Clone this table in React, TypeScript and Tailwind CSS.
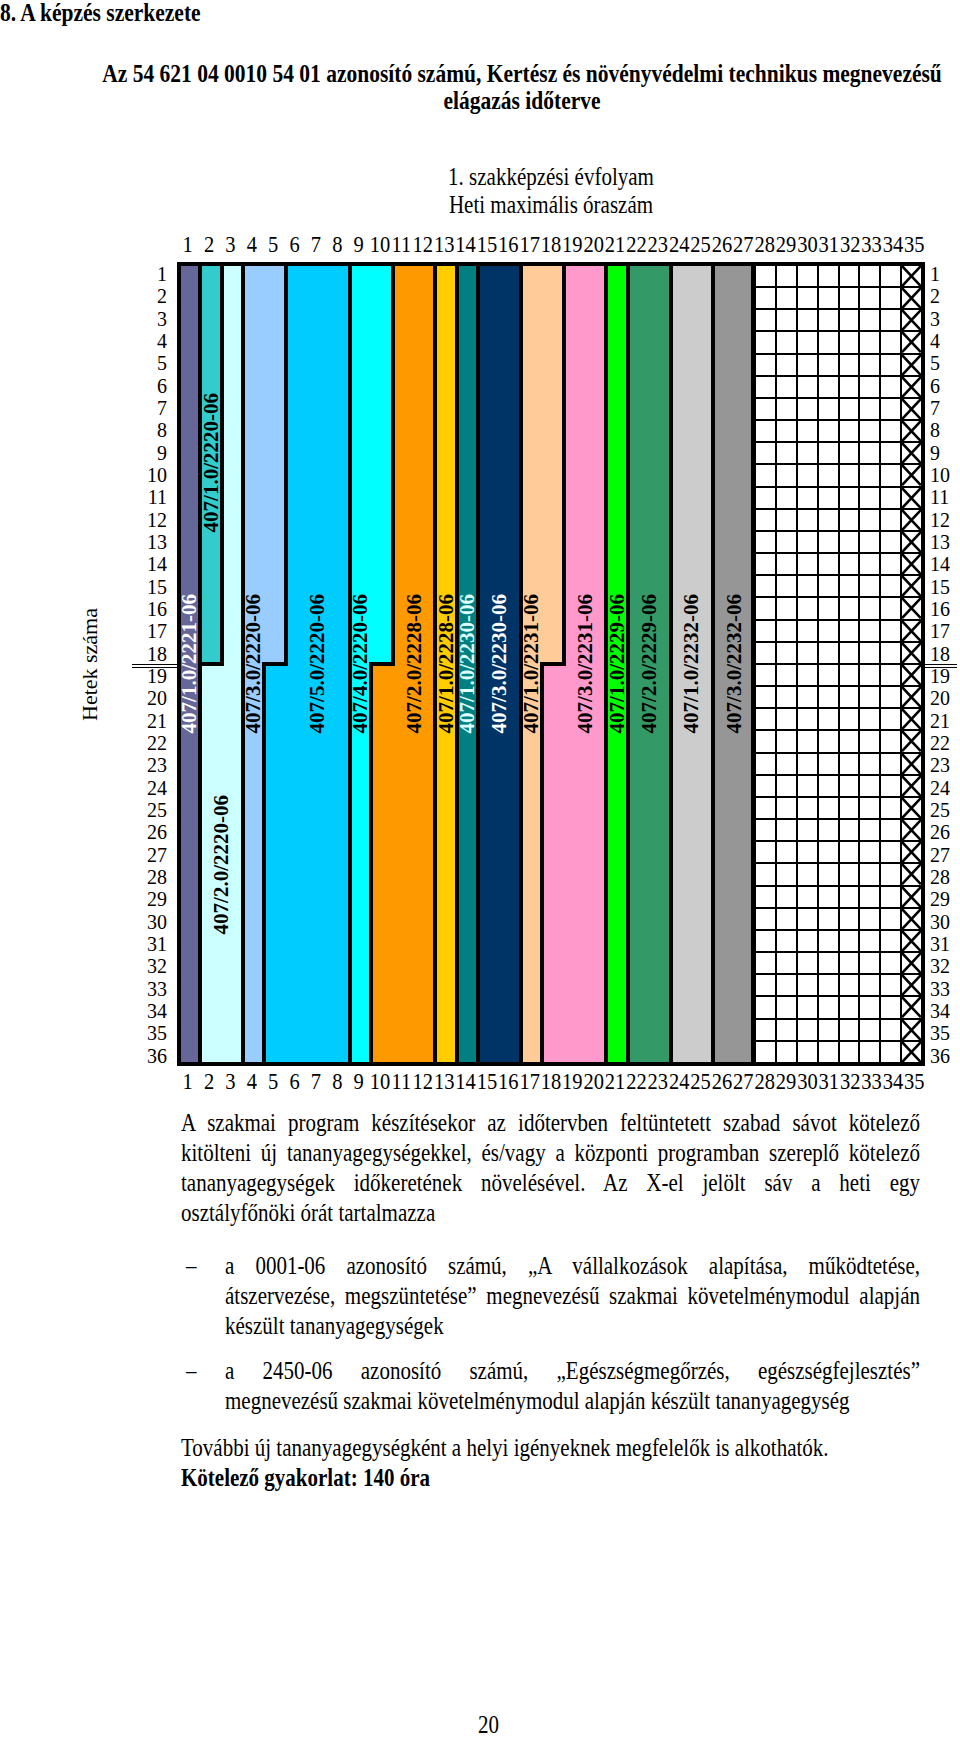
import clsx from 'clsx'

const rows = Array.from({ length: 36 }, (_, i) => i + 1)
const cols = Array.from({ length: 35 }, (_, i) => i + 1)

// colour fills of the timetable; L-shaped modules are split into a top and a bottom half
const pieces = [
  'col-start-1 col-span-1 row-start-1 row-span-36 ml-[4px] mt-[4px] mb-[4px] bg-[#666699]',
  'col-start-2 col-span-1 row-start-1 row-span-18 ml-[4px] mt-[4px] mb-[2px] bg-[#33cccc]',
  'col-start-3 col-span-1 row-start-1 row-span-18 ml-[4px] mt-[4px] -mb-[2px] bg-[#ccffff]',
  'col-start-2 col-span-2 row-start-19 row-span-18 ml-[4px] mt-[2px] mb-[4px] bg-[#ccffff]',
  'col-start-4 col-span-2 row-start-1 row-span-18 ml-[4px] mt-[4px] mb-[2px] bg-[#99ccff]',
  'col-start-4 col-span-1 row-start-19 row-span-18 ml-[4px] -mt-[2px] mb-[4px] bg-[#99ccff]',
  'col-start-6 col-span-3 row-start-1 row-span-18 ml-[4px] mt-[4px] -mb-[2px] bg-[#00ccff]',
  'col-start-5 col-span-4 row-start-19 row-span-18 ml-[4px] mt-[2px] mb-[4px] bg-[#00ccff]',
  'col-start-9 col-span-2 row-start-1 row-span-18 ml-[4px] mt-[4px] mb-[2px] bg-[#00ffff]',
  'col-start-9 col-span-1 row-start-19 row-span-18 ml-[4px] -mt-[2px] mb-[4px] bg-[#00ffff]',
  'col-start-11 col-span-2 row-start-1 row-span-18 ml-[4px] mt-[4px] -mb-[2px] bg-[#ff9900]',
  'col-start-10 col-span-3 row-start-19 row-span-18 ml-[4px] mt-[2px] mb-[4px] bg-[#ff9900]',
  'col-start-13 col-span-1 row-start-1 row-span-36 ml-[4px] mt-[4px] mb-[4px] bg-[#ffcc00]',
  'col-start-14 col-span-1 row-start-1 row-span-36 ml-[4px] mt-[4px] mb-[4px] bg-[#008080]',
  'col-start-15 col-span-2 row-start-1 row-span-36 ml-[4px] mt-[4px] mb-[4px] bg-[#003366]',
  'col-start-17 col-span-2 row-start-1 row-span-18 ml-[4px] mt-[4px] mb-[2px] bg-[#ffcc99]',
  'col-start-17 col-span-1 row-start-19 row-span-18 ml-[4px] -mt-[2px] mb-[4px] bg-[#ffcc99]',
  'col-start-19 col-span-2 row-start-1 row-span-18 ml-[4px] mt-[4px] -mb-[2px] bg-[#ff99cc]',
  'col-start-18 col-span-3 row-start-19 row-span-18 ml-[4px] mt-[2px] mb-[4px] bg-[#ff99cc]',
  'col-start-21 col-span-1 row-start-1 row-span-36 ml-[4px] mt-[4px] mb-[4px] bg-[#00ff00]',
  'col-start-22 col-span-2 row-start-1 row-span-36 ml-[4px] mt-[4px] mb-[4px] bg-[#339966]',
  'col-start-24 col-span-2 row-start-1 row-span-36 ml-[4px] mt-[4px] mb-[4px] bg-[#cccccc]',
  'col-start-26 col-span-2 row-start-1 row-span-36 ml-[4px] mt-[4px] mb-[4px] mr-[3px] bg-[#969696]',
]

const labels = [
  { cls: 'col-start-1 col-span-1 row-start-1 row-span-36 text-white', text: '407/1.0/2221-06' },
  { cls: 'col-start-2 col-span-1 row-start-1 row-span-18', text: '407/1.0/2220-06' },
  { cls: 'col-start-2 col-span-2 row-start-19 row-span-18', text: '407/2.0/2220-06' },
  { cls: 'col-start-4 col-span-1 row-start-1 row-span-36', text: '407/3.0/2220-06' },
  { cls: 'col-start-6 col-span-3 row-start-1 row-span-36', text: '407/5.0/2220-06' },
  { cls: 'col-start-9 col-span-1 row-start-1 row-span-36', text: '407/4.0/2220-06' },
  { cls: 'col-start-11 col-span-2 row-start-1 row-span-36', text: '407/2.0/2228-06' },
  { cls: 'col-start-13 col-span-1 row-start-1 row-span-36', text: '407/1.0/2228-06' },
  { cls: 'col-start-14 col-span-1 row-start-1 row-span-36 text-[#ddffff]', text: '407/1.0/2230-06' },
  { cls: 'col-start-15 col-span-2 row-start-1 row-span-36 text-white', text: '407/3.0/2230-06' },
  { cls: 'col-start-17 col-span-1 row-start-1 row-span-36', text: '407/1.0/2231-06' },
  { cls: 'col-start-19 col-span-2 row-start-1 row-span-36', text: '407/3.0/2231-06' },
  { cls: 'col-start-21 col-span-1 row-start-1 row-span-36', text: '407/1.0/2229-06' },
  { cls: 'col-start-22 col-span-2 row-start-1 row-span-36', text: '407/2.0/2229-06' },
  { cls: 'col-start-24 col-span-2 row-start-1 row-span-36', text: '407/1.0/2232-06' },
  { cls: 'col-start-26 col-span-2 row-start-1 row-span-36', text: '407/3.0/2232-06' },
]

function NumberRow() {
  return (
    <div className="ml-[177px] grid h-[26px] w-[748px] grid-cols-35">
      {cols.map((n) => (
        <div key={n} className="flex items-center justify-center whitespace-nowrap">
          <span className="inline-block scale-y-[1.15] text-[20.5px]">{n}</span>
        </div>
      ))}
    </div>
  )
}

function RowLabels({ right }: { right?: boolean }) {
  return (
    <div className={clsx('grid h-[804px] grid-rows-36', right ? 'w-[32px]' : 'w-[45px]')}>
      {rows.map((n) => (
        <div
          key={n}
          className={clsx(
            'flex items-center',
            right ? 'justify-start pl-[5px]' : 'justify-end pr-[10px]',
            n === 18 && '-mb-[4px] border-b-[4px] border-double border-black'
          )}
        >
          <span className="inline-block scale-y-[1.08] text-[20px] leading-none">{n}</span>
        </div>
      ))}
    </div>
  )
}

function Line({ children, justify, className }: { children: React.ReactNode; justify?: boolean; className?: string }) {
  return (
    <div
      className={clsx(
        'h-[30px] scale-y-[1.15] leading-[30px]',
        justify && 'text-justify [text-align-last:justify]',
        className
      )}
    >
      {children}
    </div>
  )
}

export default function App() {
  return (
    <div className="relative h-[1739px] w-[960px] overflow-hidden bg-white text-[21px] text-black [font-family:'Liberation_Serif','Times_New_Roman',serif]">
      <div className="h-[26px] scale-y-[1.15] text-[21.5px] leading-[26px] font-bold">8. A képzés szerkezete</div>

      <div className="mt-[35px] ml-[100px] w-[844px] text-center text-[21.5px] font-bold">
        <div className="h-[27px] scale-y-[1.15] leading-[27px]">
          Az 54 621 04 0010 54 01 azonosító számú, Kertész és növényvédelmi technikus megnevezésű
        </div>
        <div className="h-[27px] scale-y-[1.15] leading-[27px]">elágazás időterve</div>
      </div>

      <div className="mt-[48px] ml-[177px] w-[748px] text-center">
        <div className="h-[28px] scale-y-[1.15] leading-[28px]">1. szakképzési évfolyam</div>
        <div className="h-[28px] scale-y-[1.15] leading-[28px]">Heti maximális óraszám</div>
      </div>

      <div className="mt-[10px]">
        <NumberRow />
      </div>

      <div className="mt-[7px] flex h-[804px]">
        <div className="flex w-[132px] items-center pl-[79px]">
          <span className="rotate-180 text-[22px] leading-none whitespace-nowrap [writing-mode:vertical-rl]">
            Hetek száma
          </span>
        </div>
        <RowLabels />

        <div className="grid h-[804px] w-[748px] grid-cols-35 grid-rows-36 bg-black">
          {pieces.map((p, i) => (
            <div key={i} className={p} />
          ))}

          <div className="col-span-8 col-start-28 row-span-36 row-start-1 pt-[3px] pr-[3px] pb-[3px] pl-[1px]">
            <div className="grid h-full grid-cols-8 grid-rows-36">
              {rows.map((r) =>
                Array.from({ length: 8 }, (_, c) => (
                  <div key={`${r}-${c}`} className="m-[1px] bg-white">
                    {c === 7 && (
                      <svg viewBox="0 0 10 10" preserveAspectRatio="none" className="block h-full w-full">
                        <path d="M0 0L10 10M10 0L0 10" stroke="#000" strokeWidth={2.6} vectorEffect="non-scaling-stroke" />
                      </svg>
                    )}
                  </div>
                ))
              )}
            </div>
          </div>

          {labels.map((l) => (
            <div key={l.text + l.cls} className={clsx('flex items-center justify-center pl-[4px]', l.cls)}>
              <span className="rotate-180 text-[21px] leading-none font-bold whitespace-nowrap [writing-mode:vertical-rl]">
                {l.text}
              </span>
            </div>
          ))}
        </div>

        <RowLabels right />
      </div>

      <NumberRow />

      <div className="mt-[16px] ml-[181px] w-[739px]">
        <Line justify>A szakmai program készítésekor az időtervben feltüntetett szabad sávot kötelező</Line>
        <Line justify>kitölteni új tananyagegységekkel, és/vagy a központi programban szereplő kötelező</Line>
        <Line justify>tananyagegységek időkeretének növelésével. Az X-el jelölt sáv a heti egy</Line>
        <Line>osztályfőnöki órát tartalmazza</Line>
      </div>

      <div className="mt-[23px] ml-[181px] flex">
        <div className="w-[44px] pl-[5px]">
          <Line>–</Line>
        </div>
        <div className="w-[695px]">
          <Line justify>a 0001-06 azonosító számú, „A vállalkozások alapítása, működtetése,</Line>
          <Line justify>átszervezése, megszüntetése” megnevezésű szakmai követelménymodul alapján</Line>
          <Line>készült tananyagegységek</Line>
        </div>
      </div>

      <div className="mt-[15px] ml-[181px] flex">
        <div className="w-[44px] pl-[5px]">
          <Line>–</Line>
        </div>
        <div className="w-[695px]">
          <Line justify>a 2450-06 azonosító számú, „Egészségmegőrzés, egészségfejlesztés”</Line>
          <Line>megnevezésű szakmai követelménymodul alapján készült tananyagegység</Line>
        </div>
      </div>

      <div className="mt-[17px] ml-[181px] w-[739px]">
        <Line>További új tananyagegységként a helyi igényeknek megfelelők is alkothatók.</Line>
        <Line className="font-bold">Kötelező gyakorlat: 140 óra</Line>
      </div>

      <div className="mt-[220px] ml-[478px] h-[24px] scale-y-[1.15] leading-[24px]">20</div>
    </div>
  )
}
